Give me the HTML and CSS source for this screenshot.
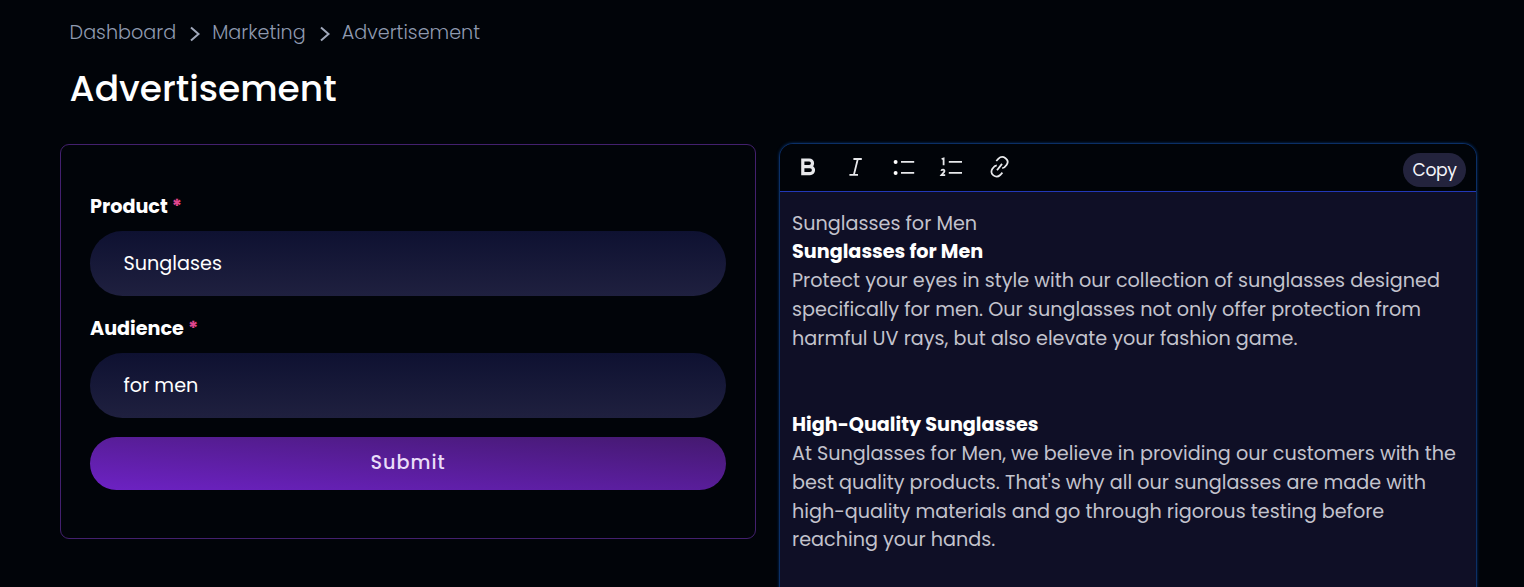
FILE: index.html
```html
<!DOCTYPE html>
<html lang="en">
<head>
<meta charset="utf-8">
<title>Advertisement</title>
<link rel="stylesheet" href="styles.css">
</head>
<body>
<header class="page-header">
  <nav class="breadcrumb">
    <span class="crumb-dashboard">Dashboard</span>
    <svg class="chevron" viewBox="0 0 12 16"><path d="M2 1.5l7.5 6.5L2 14.5"/></svg>
    <span class="crumb-marketing">Marketing</span>
    <svg class="chevron" viewBox="0 0 12 16"><path d="M2 1.5l7.5 6.5L2 14.5"/></svg>
    <span>Advertisement</span>
  </nav>
  <h1 class="title">Advertisement</h1>
</header>
<main class="columns">
  <form class="form-card">
    <label class="label">Product <span class="required">*</span></label>
    <div class="field">Sunglases</div>
    <label class="label">Audience <span class="required">*</span></label>
    <div class="field">for men</div>
    <button class="submit" type="button">Submit</button>
  </form>
  <section class="editor">
    <div class="toolbar">
      <svg class="tool" viewBox="0 0 22 22"><path class="stroke-bold" d="M4.8 4h6.4a3.3 3.3 0 0 1 0 6.6H4.8zM4.8 10.6h7.2a3.5 3.5 0 0 1 0 7H4.8z"/></svg>
      <svg class="tool" viewBox="0 0 22 22"><path d="M7.4 3h8.4M3.4 18.8h8.6M11.8 3l-3.9 15.8"/></svg>
      <svg class="tool" viewBox="0 0 22 22"><circle class="dot" cx="1.6" cy="5.9" r="2"/><circle class="dot" cx="1.6" cy="16.9" r="2"/><path d="M7 5.9h13.2M7 16.9h13.2"/></svg>
      <svg class="tool" viewBox="0 0 22 22"><path d="M7.8 5.9h13.2M7.8 16.9h13.2"/><path d="M.6 3l2-.6v6.8M.3 14.9c.3-1.8 3.5-1.7 3.1.3-.2 1.1-1.9 2.4-3 3.9h3.8"/></svg>
      <svg class="tool" viewBox="0 0 22 22"><path d="M7.3 5l2.2-2.4c4.3-4.2 11.6 1 8.2 6.1-1.1 1.6-2.4 3.4-4.5 3.5M13.4 16.6l-2.2 2.4c-4.3 4-11.2-1-7.8-6.2 1.1-1.6 2.4-3.2 4.4-3.4M8 14.3l5-6.4"/></svg>
      <button class="copy" type="button">Copy</button>
    </div>
    <article class="content">
      <p class="line">Sunglasses for Men</p>
      <h2 class="line">Sunglasses for Men</h2>
      <p class="line">Protect your eyes in style with our collection of sunglasses designed</p>
      <p class="line">specifically for men. Our sunglasses not only offer protection from</p>
      <p class="line">harmful UV rays, but also elevate your fashion game.</p>
      <h2 class="line section-gap">High-Quality Sunglasses</h2>
      <p class="line">At Sunglasses for Men, we believe in providing our customers with the</p>
      <p class="line">best quality products. That's why all our sunglasses are made with</p>
      <p class="line">high-quality materials and go through rigorous testing before</p>
      <p class="line">reaching your hands.</p>
    </article>
  </section>
</main>
</body>
</html>
```
FILE: styles.css
```css
* { box-sizing: border-box; }
body {
  margin: 0;
  height: 587px;
  overflow: hidden;
  background: #010409;
  color: #fff;
  font-family: Poppins, Inter, "Liberation Sans", sans-serif;
  font-size: 19.2px;
  line-height: 28.8px;
}
h1, h2, p { margin: 0; }
button { border: 0; font-family: inherit; }
.page-header { height: 143px; padding: 19px 0 0 69.6px; }
.breadcrumb { display: flex; align-items: center; color: #8f9ab0; font-weight: 300; white-space: nowrap; }
.crumb-dashboard { width: 107px; }
.crumb-marketing { width: 94px; }
.chevron { flex: none; width: 12px; height: 16px; margin: 1px 11px 0 12.6px; fill: none; stroke: #a0a8ba; stroke-width: 2; }
.title { margin-top: 14px; font-size: 36px; line-height: 54px; font-weight: 500; white-space: nowrap; }
.columns { display: flex; align-items: flex-start; padding-left: 60px; gap: 23px; }
.form-card {
  display: flex;
  flex-direction: column;
  width: 696px;
  height: 395px;
  margin-top: 1px;
  padding: 48px 29px 0;
  border: 1px solid #43206e;
  border-radius: 9px;
}
.label { font-weight: 700; white-space: nowrap; }
.required { color: #e2468f; }
.field {
  display: flex;
  align-items: center;
  height: 65px;
  margin: 9px 0 19px;
  padding: 2px 0 0 33.5px;
  border-radius: 33px;
  background: linear-gradient(#0e1131, #1f203f);
  white-space: nowrap;
}
.submit {
  height: 53px;
  padding: 0 0 2px;
  border-radius: 27px;
  background: linear-gradient(to top right, #6d22c4, #44196f);
  color: #e9dcf8;
  font-size: 19.2px;
  font-weight: 500;
  letter-spacing: 1px;
}
.editor {
  width: 698px;
  height: 460px;
  border: 1px solid #0b2f66;
  border-radius: 14px;
  background: #0f0f26;
  box-shadow: 0 0 3px #06316c;
  overflow: hidden;
}
.toolbar {
  display: flex;
  height: 48px;
  padding: 12px 10px 0 18px;
  gap: 25.8px;
  border-bottom: 1px solid #2238b8;
  background: #010409;
}
.tool { width: 22px; height: 22px; flex: none; fill: none; stroke: #e8e9ec; stroke-width: 1.8; overflow: visible; }
.stroke-bold { stroke-width: 3.2; }
.dot { fill: #fff; stroke: none; }
.copy {
  width: 63px;
  height: 34px;
  margin: -3px 0 0 auto;
  padding: 0;
  border-radius: 17px;
  background: #23233d;
  color: #f5f5fa;
  font-size: 17.2px;
  letter-spacing: -.4px;
}
.content { padding: 17.6px 12px; color: #c3c3cd; }
.line { font-size: 19.2px; line-height: 28.8px; white-space: nowrap; }
h2.line { color: #fff; font-weight: 700; }
.section-gap { margin-top: 57.6px; }
```
